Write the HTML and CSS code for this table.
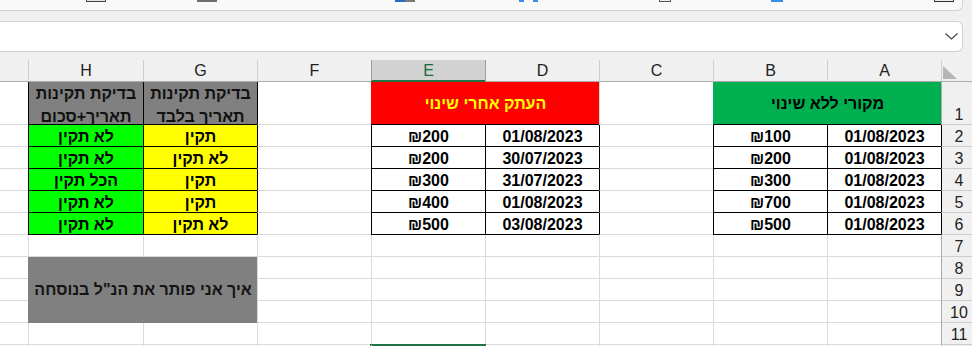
FILE: index.html
```html
<!DOCTYPE html>
<html lang="he">
<head>
	<meta charset="UTF-8">
	<title>Book1</title>
	<link rel="stylesheet" href="styles.css">
</head>
<body>
	<!-- bottom edge of the ribbon -->
	<div class="ribbon">
		<span class="ic ic1"></span>
		<span class="ic ic2"></span>
		<span class="ic ic3"></span>
		<span class="ic ic4"></span>
		<span class="ic ic5"></span>
		<span class="ic ic6"></span>
		<span class="ic ic7"></span>
		<span class="ic ic8"></span>
		<span class="ic ic9"></span>
	</div>
	<div class="fbar">
		<svg class="chev" viewBox="0 0 13 7"><path d="M0.5 0.5L6.5 6L12.5 0.5" fill="none" stroke="#444" stroke-width="1.2"/></svg>
	</div>

	<div class="sheet" dir="rtl">
		<!-- column headers -->
		<div class="ch corner"><i class="tri"></i></div>
		<div class="ch">A</div>
		<div class="ch">B</div>
		<div class="ch">C</div>
		<div class="ch nx">D</div>
		<div class="ch sel">E</div>
		<div class="ch">F</div>
		<div class="ch">G</div>
		<div class="ch">H</div>
		<div class="ch i"></div>

		<!-- 1 -->
		<div class="rh">1</div>
		<div class="c grn m2 bb mid">מקורי ללא שינוי</div>
		<div class="c"></div>
		<div class="c red m2 bb mid">העתק אחרי שינוי</div>
		<div class="c bl"></div>
		<div class="c gray b top">בדיקת תקינות<br>תאריך בלבד</div>
		<div class="c gray b top">בדיקת תקינות<br>תאריך+סכום</div>
		<div class="c i"></div>

		<!-- 2 -->
		<div class="rh bl">2</div>
		<div class="c b">01/08/2023</div>
		<div class="c b">₪100</div>
		<div class="c bl"></div>
		<div class="c b">01/08/2023</div>
		<div class="c b">₪200</div>
		<div class="c bl"></div>
		<div class="c yel b">תקין</div>
		<div class="c lime b">לא תקין</div>
		<div class="c i"></div>

		<!-- 3 -->
		<div class="rh bl">3</div>
		<div class="c b">01/08/2023</div>
		<div class="c b">₪200</div>
		<div class="c bl"></div>
		<div class="c b">30/07/2023</div>
		<div class="c b">₪200</div>
		<div class="c bl"></div>
		<div class="c yel b">לא תקין</div>
		<div class="c lime b">לא תקין</div>
		<div class="c i"></div>

		<!-- 4 -->
		<div class="rh bl">4</div>
		<div class="c b">01/08/2023</div>
		<div class="c b">₪300</div>
		<div class="c bl"></div>
		<div class="c b">31/07/2023</div>
		<div class="c b">₪300</div>
		<div class="c bl"></div>
		<div class="c yel b">תקין</div>
		<div class="c lime b">הכל תקין</div>
		<div class="c i"></div>

		<!-- 5 -->
		<div class="rh bl">5</div>
		<div class="c b">01/08/2023</div>
		<div class="c b">₪700</div>
		<div class="c bl"></div>
		<div class="c b">01/08/2023</div>
		<div class="c b">₪400</div>
		<div class="c bl"></div>
		<div class="c yel b">תקין</div>
		<div class="c lime b">לא תקין</div>
		<div class="c i"></div>

		<!-- 6 -->
		<div class="rh bl">6</div>
		<div class="c b">01/08/2023</div>
		<div class="c b">₪500</div>
		<div class="c bl"></div>
		<div class="c b">03/08/2023</div>
		<div class="c b">₪500</div>
		<div class="c bl"></div>
		<div class="c yel b">לא תקין</div>
		<div class="c lime b">לא תקין</div>
		<div class="c i"></div>

		<!-- 7 -->
		<div class="rh">7</div>
		<div class="c"></div>
		<div class="c"></div>
		<div class="c"></div>
		<div class="c"></div>
		<div class="c"></div>
		<div class="c"></div>
		<div class="c"></div>
		<div class="c"></div>
		<div class="c i"></div>

		<!-- 8, the question spans G8:H10 -->
		<div class="rh">8</div>
		<div class="c"></div>
		<div class="c"></div>
		<div class="c"></div>
		<div class="c"></div>
		<div class="c"></div>
		<div class="c"></div>
		<div class="c blk">איך אני פותר את הנ"ל בנוסחה</div>
		<div class="c i"></div>

		<!-- 9 -->
		<div class="rh">9</div>
		<div class="c"></div>
		<div class="c"></div>
		<div class="c"></div>
		<div class="c"></div>
		<div class="c"></div>
		<div class="c"></div>
		<div class="c i"></div>

		<!-- 10 -->
		<div class="rh">10</div>
		<div class="c"></div>
		<div class="c"></div>
		<div class="c"></div>
		<div class="c"></div>
		<div class="c"></div>
		<div class="c"></div>
		<div class="c i"></div>

		<!-- 11 -->
		<div class="rh">11</div>
		<div class="c"></div>
		<div class="c"></div>
		<div class="c"></div>
		<div class="c"></div>
		<div class="c"></div>
		<div class="c"></div>
		<div class="c"></div>
		<div class="c"></div>
		<div class="c i"></div>

		<!-- 12, only its top edge shows -->
		<div class="rh"></div>
		<div class="c"></div>
		<div class="c"></div>
		<div class="c"></div>
		<div class="c"></div>
		<div class="c act"></div>
		<div class="c"></div>
		<div class="c"></div>
		<div class="c"></div>
		<div class="c i"></div>
	</div>
</body>
</html>
```

FILE: styles.css
```css
*{
	margin: 0;
	padding: 0;
	box-sizing: border-box;
}
body{
	width: 972px;
	height: 346px;
	overflow: hidden;
	background: #f0f0f0;
	font-family: "Liberation Sans", "DejaVu Sans", Arial, sans-serif;
}

/* ribbon + formula bar */
.ribbon{
	width: 963px;
	height: 11px;
	background: #f9f9f9;
	border-bottom: 1px solid #d2d2d2;
	border-right: 1px solid #d2d2d2;
	border-bottom-right-radius: 6px;
	display: flex;
	align-items: flex-start;
}
.ic{
	flex: none;
	height: 2px;
}
.ic1{width: 20px;margin-left: 86px;border: 1px solid #444;border-top: none;background: #e4e4e4;}
.ic2{width: 20px;margin-left: 91px;background: #6e6e6e;}
.ic3{width: 10px;margin-left: 178px;background: #1f6fc5;}
.ic4{width: 10px;background: #7a7a7a;}
.ic5{width: 5px;margin-left: 104px;background: #3a8ee6;}
.ic6{width: 5px;margin-left: 9px;background: #3a8ee6;}
.ic7{width: 12px;margin-left: 121px;border: 1px solid #555;border-top: none;background: #eee;}
.ic8{width: 12px;margin-left: 100px;background: #3a8ee6;}
.ic9{width: 20px;margin-left: 151px;border: 1px solid #333;border-top: none;background: #eee;}

.fbar{
	width: 963px;
	height: 31px;
	margin: 10px 0 8px;
	background: #fff;
	border: 1px solid #d0d0d0;
	border-left: none;
	border-radius: 0 6px 6px 0;
	display: flex;
	align-items: center;
	justify-content: flex-end;
	padding-right: 4px;
}
.chev{
	width: 13px;
	height: 7px;
}

/* the grid: row headers, A..G, H, and a sliver of I */
.sheet{
	direction: rtl;
	width: 976px;
	height: 287px;
	overflow: hidden;
	display: grid;
	grid-template-columns: 35px repeat(7, 114px) 115px 28px;
	grid-template-rows: 22px 43px;
	grid-auto-rows: 22px;
	background: #fff;
}
.ch{
	background: #f0f0f0;
	border-left: 1px solid #cdcdcd;
	border-bottom: 1px solid #ababab;
	display: flex;
	align-items: center;
	justify-content: center;
	font-size: 16px;
	line-height: 19px;
	color: #222;
}
.ch.sel{
	background: #d2d2d2;
	border-left-color: #9e9e9e;
	border-bottom: 2px solid #217346;
	color: #1d6a40;
}
.ch.nx{
	border-left-color: #9e9e9e;
}
.corner{
	direction: ltr;
	justify-content: flex-start;
	align-items: flex-end;
	padding: 0 0 2px 1px;
}
.tri{
	width: 0;
	height: 0;
	border-bottom: 13px solid #b5b5b5;
	border-right: 14px solid transparent;
}
.rh{
	background: #f0f0f0;
	border-left: 1px solid #ababab;
	border-bottom: 1px solid #cdcdcd;
	display: flex;
	align-items: flex-end;
	justify-content: center;
	font-size: 16px;
	line-height: 19px;
	color: #222;
}

.c{
	border-left: 1px solid #dadada;
	border-bottom: 1px solid #dadada;
	display: flex;
	align-items: flex-end;
	justify-content: center;
	text-align: center;
	font-size: 16px;
	font-weight: bold;
	line-height: 19px;
	color: #000;
}
.ch.i,.c.i{
	border-left: none;
}
.mid{
	align-items: center;
}
.top{
	align-items: flex-start;
	line-height: 23px;
	color: #111;
}
.m2{
	grid-column: span 2;
}
.blk{
	grid-column: span 2;
	grid-row: span 3;
	align-items: center;
	background: #808080;
	color: #141414;
}

/* fills hide the gridlines under them */
.gray{background: #808080;}
.yel{background: #ff0;}
.lime{background: #0f0;}
.red{background: #f00;color: #ff0;}
.grn{background: #00b050;}
.gray,.yel,.lime,.red,.grn,.blk{
	border-color: transparent;
}

/* black cell borders */
.b{border-color: #000;}
.bl{border-left-color: #000;}
.bb{border-bottom-color: #000;}

.act{
	position: relative;
	z-index: 1;
	box-shadow: 0 0 0 1px #217346, inset 0 0 0 1px #217346;
}
```
